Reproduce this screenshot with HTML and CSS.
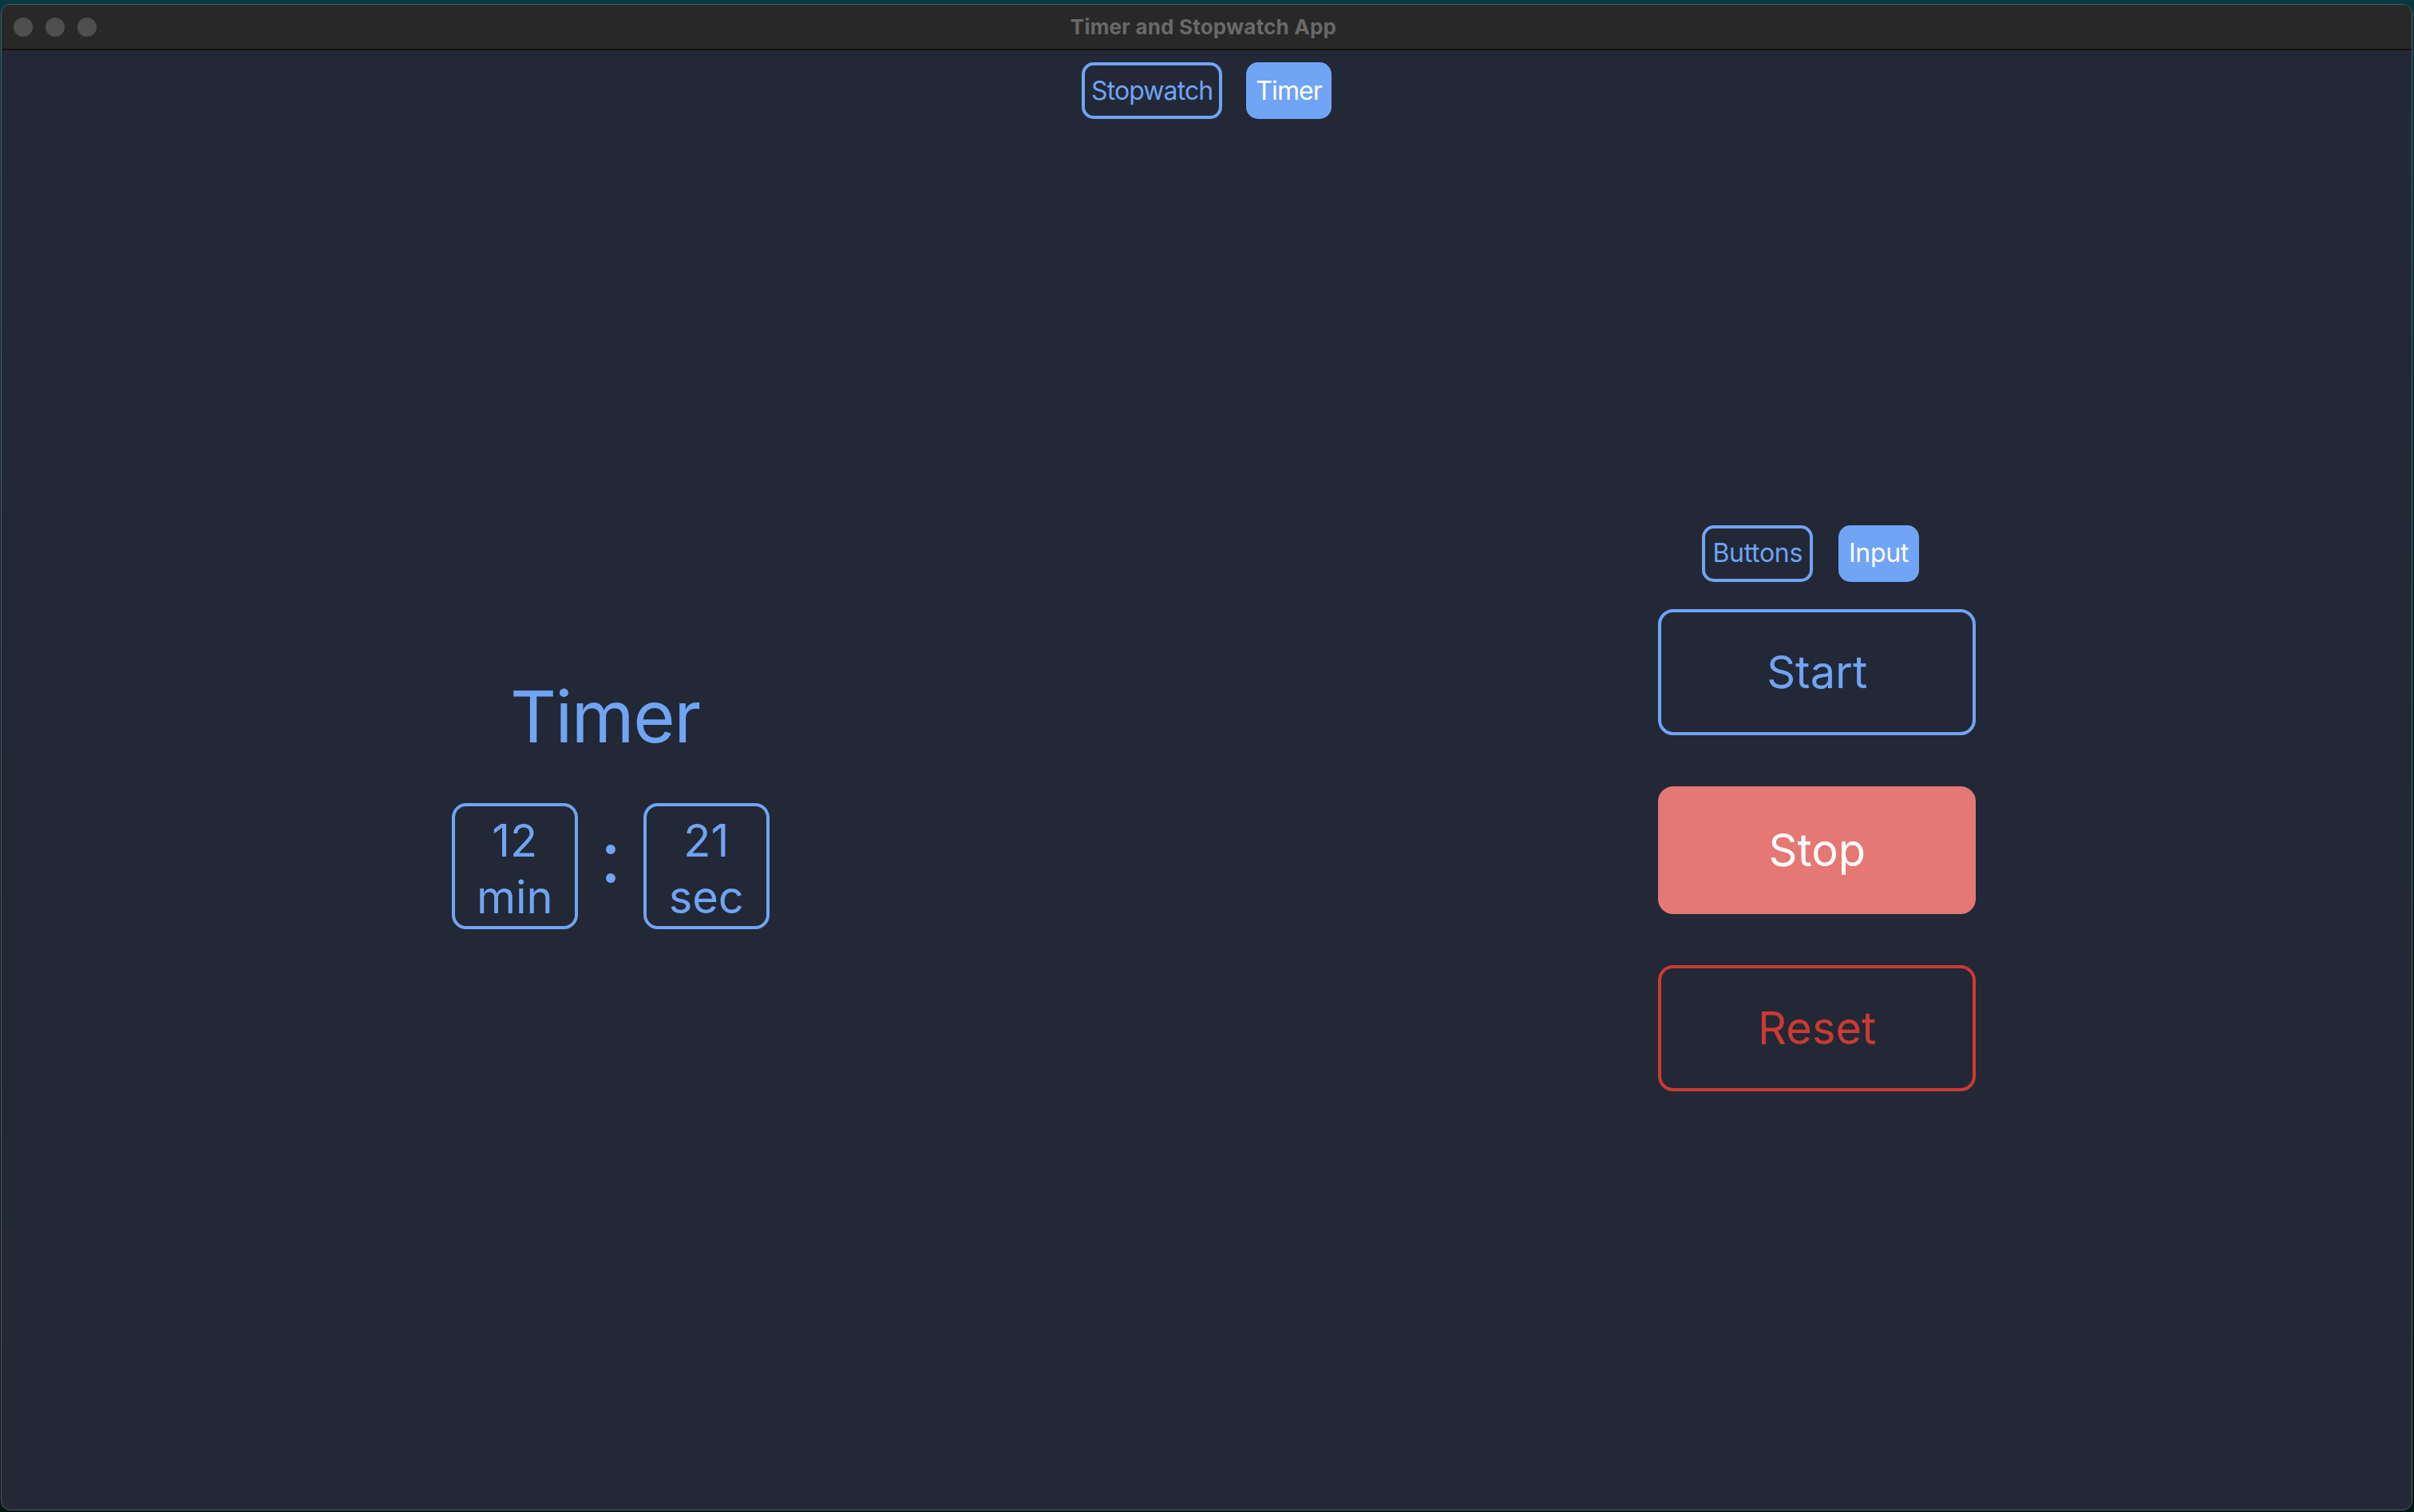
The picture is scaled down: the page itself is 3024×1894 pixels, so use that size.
FILE: index.html
```html
<!DOCTYPE html>
<html lang="en">
<head>
<meta charset="utf-8">
<title>Timer and Stopwatch App</title>
<link rel="stylesheet" href="styles.css">
</head>
<body>
<div class="window">
  <header class="titlebar">
    <div class="lights"><span class="light"></span><span class="light"></span><span class="light"></span></div>
    <div class="title">Timer and Stopwatch App</div>
  </header>
  <div class="content">
    <nav class="tabs">
      <button class="pill outline">Stopwatch</button>
      <button class="pill filled">Timer</button>
    </nav>
    <main class="panes">
      <section class="pane left">
        <h1 class="heading">Timer</h1>
        <div class="clock">
          <div class="unit"><span>12</span><span>min</span></div>
          <div class="colon"><i></i><i></i></div>
          <div class="unit"><span>21</span><span>sec</span></div>
        </div>
      </section>
      <section class="pane right">
        <div class="controls">
          <div class="toggles">
            <button class="toggle outline">Buttons</button>
            <button class="toggle filled">Input</button>
          </div>
          <button class="big start">Start</button>
          <button class="big stop">Stop</button>
          <button class="big reset">Reset</button>
        </div>
      </section>
    </main>
  </div>
</div>
</body>
</html>
```

FILE: styles.css
```css
* { box-sizing: border-box; }
html, body { margin: 0; padding: 0; }
body {
  width: 3024px;
  height: 1894px;
  background: linear-gradient(180deg, #063a40 0%, #06262a 50%, #041516 100%);
  font-family: Inter, "Noto Sans", "Liberation Sans", sans-serif;
  overflow: hidden;
  padding: 5px 2px 2px 1px;
}
.window {
  width: 3021px;
  height: 1887px;
  border-radius: 12px;
  border: 1px solid #56595f;
  background: #222836;
  overflow: hidden;
  display: flex;
  flex-direction: column;
}
.titlebar {
  height: 57px;
  flex: none;
  background: #282828;
  border-bottom: 2px solid #111111;
  position: relative;
  display: flex;
  align-items: center;
  justify-content: center;
  padding-right: 8px;
}
.lights {
  position: absolute;
  left: 15px;
  top: 16px;
  display: flex;
  gap: 16px;
}
.light {
  width: 24px;
  height: 24px;
  border-radius: 50%;
  background: #4f4f4f;
}
.title {
  color: #696969;
  font-weight: 700;
  font-size: 26px;
  letter-spacing: 0.2px;
}
.content {
  flex: 1;
  display: flex;
  flex-direction: column;
}
.tabs {
  display: flex;
  justify-content: center;
  gap: 30px;
  padding-top: 15px;
}
button {
  font-family: inherit;
  cursor: pointer;
  margin: 0;
}
.pill, .toggle {
  height: 71px;
  border: 4px solid #70a4f4;
  border-radius: 15px;
  line-height: 1;
}
.pill {
  font-size: 32px;
  letter-spacing: -0.9px;
  padding: 0 8px;
}
.toggle {
  font-size: 32px;
  padding: 0 9px;
  letter-spacing: -0.3px;
}
.outline { background: transparent; color: #70a4f4; }
.filled { background: #70a4f4; color: #ffffff; }
.panes {
  flex: 1;
  display: grid;
  grid-template-columns: 1fr 1fr;
  align-items: center;
}
.pane {
  display: flex;
  flex-direction: column;
  align-items: center;
}
.left {
  padding-left: 16px;
  margin-bottom: 24px;
}
.right { padding-left: 20px; }
.heading {
  margin: 0;
  font-weight: 400;
  font-size: 90px;
  letter-spacing: -1.5px;
  line-height: 1;
  color: #70a4f4;
  padding-right: 14px;
}
.clock {
  margin-top: 63px;
  display: flex;
  align-items: center;
  gap: 35px;
}
.unit {
  width: 158px;
  height: 158px;
  border: 4px solid #70a4f4;
  border-radius: 18px;
  display: flex;
  flex-direction: column;
  align-items: center;
  justify-content: center;
  color: #70a4f4;
  font-size: 56px;
  line-height: 71px;
  padding-top: 8px;
}
.colon {
  display: flex;
  flex-direction: column;
  gap: 24px;
  padding-bottom: 6px;
}
.colon i {
  display: block;
  width: 12px;
  height: 12px;
  border-radius: 50%;
  background: #70a4f4;
}
.controls {
  width: 398px;
  display: flex;
  flex-direction: column;
  align-items: stretch;
  margin-top: -16px;
}
.toggles {
  display: flex;
  justify-content: center;
  gap: 32px;
  padding-right: 16px;
  margin-bottom: 34px;
}
.big {
  height: 158px;
  border-radius: 19px;
  font-size: 56px;
  line-height: 1;
  border: 4px solid transparent;
}
.start {
  background: transparent;
  border-color: #70a4f4;
  color: #70a4f4;
}
.stop {
  margin-top: 64px;
  background: #e57874;
  border-color: #e57874;
  color: #ffffff;
  height: 160px;
}
.reset {
  margin-top: 64px;
  background: transparent;
  border-color: #cc3a32;
  color: #cc3a32;
}
```
